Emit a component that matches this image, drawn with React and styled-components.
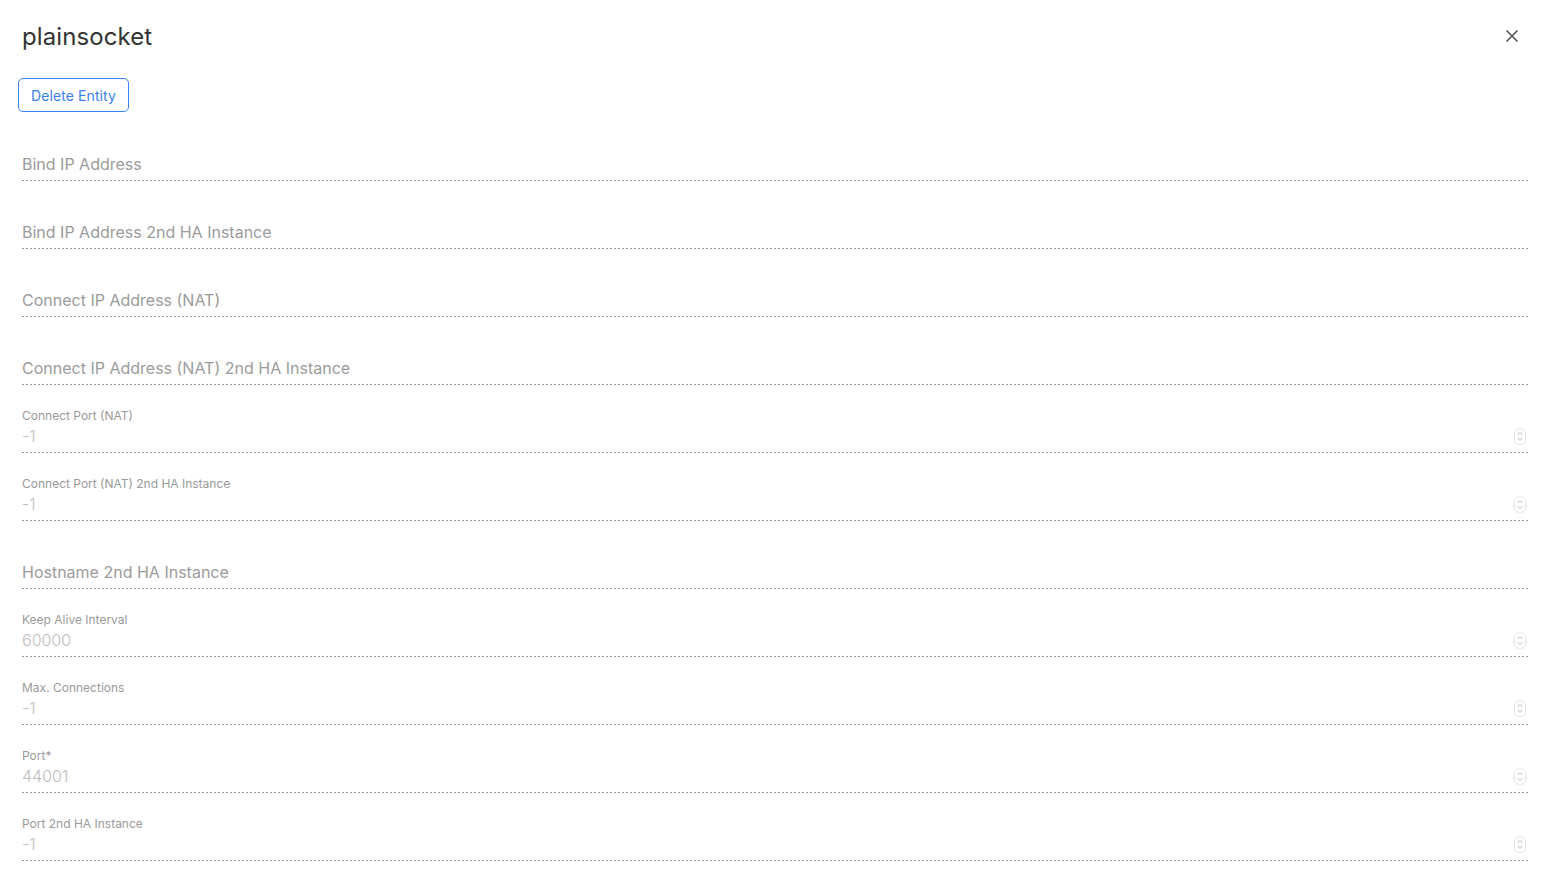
import React from 'react';
import styled, { createGlobalStyle } from 'styled-components';

const GlobalStyle = createGlobalStyle`
	html, body {
		margin: 0;
		padding: 0;
		background: #fff;
		font-family: Inter, 'Noto Sans', sans-serif;
	}
`;

const fields = [
	{ label: 'Bind IP Address' },
	{ label: 'Bind IP Address 2nd HA Instance' },
	{ label: 'Connect IP Address (NAT)' },
	{ label: 'Connect IP Address (NAT) 2nd HA Instance' },
	{ label: 'Connect Port (NAT)', value: '-1' },
	{ label: 'Connect Port (NAT) 2nd HA Instance', value: '-1' },
	{ label: 'Hostname 2nd HA Instance' },
	{ label: 'Keep Alive Interval', value: '60000' },
	{ label: 'Max. Connections', value: '-1' },
	{ label: 'Port*', value: '44001' },
	{ label: 'Port 2nd HA Instance', value: '-1' },
];

const Stepper = () => (
	<svg width="12" height="17" viewBox="0 0 12 17" fill="none">
		<rect x="0.5" y="0.5" width="11" height="16" rx="5" stroke="#e4e4e4" />
		<path d="M3.5 7 L6 4.5 L8.5 7" stroke="#b8b8b8" strokeWidth="1" />
		<path d="M3.5 10 L6 12.5 L8.5 10" stroke="#b8b8b8" strokeWidth="1" />
	</svg>
);

const CloseIcon = () => (
	<svg width="14" height="14" viewBox="0 0 14 14">
		<path d="M1.5 1.5 L12.5 12.5 M12.5 1.5 L1.5 12.5" stroke="#555" strokeWidth="1.6" />
	</svg>
);

const Field = ({ label, value }) =>
	value === undefined ? (
		<Row>
			<Placeholder>{label}</Placeholder>
		</Row>
	) : (
		<Row>
			<SmallLabel>{label}</SmallLabel>
			<ValueLine>
				<Value>{value}</Value>
				<Stepper />
			</ValueLine>
		</Row>
	);

const App = () => (
	<Page>
		<GlobalStyle />
		<Header>
			<Title>plainsocket</Title>
			<CloseButton aria-label="close">
				<CloseIcon />
			</CloseButton>
		</Header>
		<DeleteButton>Delete Entity</DeleteButton>
		<Form>
			{fields.map((f) => (
				<Field key={f.label} {...f} />
			))}
		</Form>
	</Page>
);

export default App;

const Page = styled.div`
	padding: 21px 22px 0 22px;
	box-sizing: border-box;
	width: 1550px;
`;

const Header = styled.div`
	display: flex;
	align-items: center;
	justify-content: space-between;
	height: 32px;
`;

const Title = styled.h1`
	margin: 0;
	font-size: 24px;
	line-height: 32px;
	font-weight: 400;
	color: #333;
	letter-spacing: 0.1px;
`;

const CloseButton = styled.button`
	border: none;
	background: none;
	padding: 0;
	margin: -2px 9px 0 0;
	width: 14px;
	height: 14px;
	display: flex;
	cursor: pointer;
`;

const DeleteButton = styled.button`
	margin: 25px 0 0 -4px;
	height: 34px;
	width: 111px;
	padding: 0;
	border: 1px solid #3b82f6;
	border-radius: 5px;
	background: #fff;
	color: #3b7ff0;
	font-family: Inter, sans-serif;
	font-size: 14px;
	font-weight: 400;
	letter-spacing: 0.1px;
	cursor: pointer;
`;

const Form = styled.div`
	display: flex;
	flex-direction: column;
	margin-top: 1px;
`;

const Row = styled.div`
	height: 68px;
	box-sizing: border-box;
	display: flex;
	flex-direction: column;
	justify-content: flex-end;
	padding-bottom: 7px;
	background-image: linear-gradient(to right, #9a9a9a 50%, transparent 50%);
	background-size: 4px 1px;
	background-repeat: repeat-x;
	background-position: left bottom;
`;

const Placeholder = styled.div`
	font-size: 16px;
	line-height: 20px;
	color: #9b9b9b;
`;

const SmallLabel = styled.div`
	font-size: 12px;
	line-height: 16px;
	color: #999;
	margin-bottom: 2px;
`;

const ValueLine = styled.div`
	display: flex;
	align-items: center;
	justify-content: space-between;
	height: 20px;
	padding-right: 2px;
`;

const Value = styled.span`
	font-size: 16px;
	line-height: 20px;
	font-weight: 300;
	color: #bcbcbc;
`;
